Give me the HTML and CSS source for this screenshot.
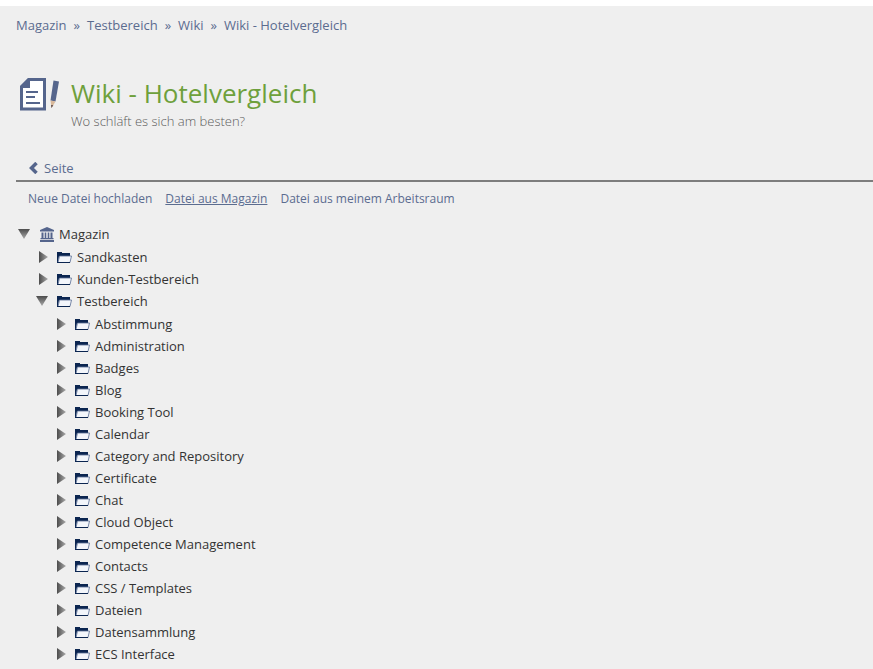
FILE: index.html
```html
<!DOCTYPE html>
<html lang="de">
<head>
<meta charset="utf-8">
<title>Wiki - Hotelvergleich</title>
<link rel="stylesheet" href="styles.css">
</head>
<body>
<svg class="defs" aria-hidden="true">
  <defs>
    <linearGradient id="shade-right" x1="0" x2="1" y1="0" y2="0"><stop offset="0" stop-color="#4c4c4c"/><stop offset="1" stop-color="#aaaaaa"/></linearGradient>
    <linearGradient id="shade-down" x1="0" x2="0" y1="0" y2="1"><stop offset="0" stop-color="#4c4c4c"/><stop offset="1" stop-color="#aaaaaa"/></linearGradient>
    <symbol id="closed" viewBox="0 0 12 12"><path fill="url(#shade-right)" d="M3 0 12 6 3 12z"/></symbol>
    <symbol id="open" viewBox="0 0 12 12"><path fill="url(#shade-down)" d="M0 1H12L6 11z"/></symbol>
    <symbol id="folder" viewBox="0 0 16 12">
      <path fill="#0b2550" d="M0 1H5V2H13V5H2L1 12H0z"/>
      <path fill="#f3f6fb" stroke="#5a6f96" stroke-width=".8" d="M2.500 5H14.500L13 11.500H1z"/>
      <path stroke="#0b2550" d="M0 11.500H13"/>
    </symbol>
  </defs>
</svg>
<div class="page">
  <nav class="breadcrumb" aria-label="Pfad">
    <a href="#">Magazin</a><span>»</span><a href="#">Testbereich</a><span>»</span><a href="#">Wiki</a><span>»</span><a href="#">Wiki - Hotelvergleich</a>
  </nav>
  <header class="heading">
    <svg class="wiki-icon" viewBox="0 0 40 36" aria-hidden="true">
      <path fill="#fff" stroke="#55658c" stroke-width="3" d="M10 4.500H25.500V34H2.500V12z"/>
      <path fill="#55658c" d="M9 3H11V13H1V11z"/>
      <path stroke="#55658c" stroke-width="2" d="M7 17H19M7 22H16M7 28H21"/>
      <path fill="#55658c" d="M34.500 5.500 40 6.500 36.500 26.500 31.500 25.500z"/>
      <path fill="#d9b99b" d="M31.500 25.500 36.500 26.500 32.500 33z"/>
      <path fill="#5c4a48" d="M32 30 34.300 30.300 32.500 33z"/>
    </svg>
    <div>
      <h1>Wiki - Hotelvergleich</h1>
      <p>Wo schläft es sich am besten?</p>
    </div>
  </header>
  <nav class="tabs" aria-label="Reiter">
    <a href="#"><svg class="chevron" viewBox="0 0 10 12" aria-hidden="true"><path fill="none" stroke="#55658c" stroke-width="3.500" d="M8.500 1 3.500 6 8.500 11"/></svg>Seite</a>
  </nav>
  <nav class="subtabs" aria-label="Quelle">
    <a href="#">Neue Datei hochladen</a>
    <a href="#" class="active" aria-current="page">Datei aus Magazin</a>
    <a href="#">Datei aus meinem Arbeitsraum</a>
  </nav>
  <ul class="tree">
    <li>
      <div class="node"><button type="button" aria-label="Magazin zuklappen"><svg viewBox="0 0 12 12"><use href="#open"/></svg></button>
        <svg class="bank" viewBox="0 0 16 16" aria-hidden="true"><path fill="#55658c" d="M8 1 15 4V5.500H1V4zM2.500 6.500H4.500V12H2.500zM5.700 6.500H7.300V12H5.700zM8.700 6.500H10.300V12H8.700zM11.500 6.500H13.500V12H11.500zM1.500 12H14.500V13.200H1.500zM1 14H15V16H1z"/></svg><span>Magazin</span></div>
      <ul>
        <li><div class="node"><button type="button" aria-label="Sandkasten aufklappen"><svg viewBox="0 0 12 12"><use href="#closed"/></svg></button><svg class="folder"><use href="#folder"/></svg><span>Sandkasten</span></div></li>
        <li><div class="node"><button type="button" aria-label="Kunden-Testbereich aufklappen"><svg viewBox="0 0 12 12"><use href="#closed"/></svg></button><svg class="folder"><use href="#folder"/></svg><span>Kunden-Testbereich</span></div></li>
        <li>
          <div class="node"><button type="button" aria-label="Testbereich zuklappen"><svg viewBox="0 0 12 12"><use href="#open"/></svg></button><svg class="folder"><use href="#folder"/></svg><span>Testbereich</span></div>
          <ul>
            <li><div class="node"><button type="button" aria-label="Abstimmung aufklappen"><svg viewBox="0 0 12 12"><use href="#closed"/></svg></button><svg class="folder"><use href="#folder"/></svg><span>Abstimmung</span></div></li>
            <li><div class="node"><button type="button" aria-label="Administration aufklappen"><svg viewBox="0 0 12 12"><use href="#closed"/></svg></button><svg class="folder"><use href="#folder"/></svg><span>Administration</span></div></li>
            <li><div class="node"><button type="button" aria-label="Badges aufklappen"><svg viewBox="0 0 12 12"><use href="#closed"/></svg></button><svg class="folder"><use href="#folder"/></svg><span>Badges</span></div></li>
            <li><div class="node"><button type="button" aria-label="Blog aufklappen"><svg viewBox="0 0 12 12"><use href="#closed"/></svg></button><svg class="folder"><use href="#folder"/></svg><span>Blog</span></div></li>
            <li><div class="node"><button type="button" aria-label="Booking Tool aufklappen"><svg viewBox="0 0 12 12"><use href="#closed"/></svg></button><svg class="folder"><use href="#folder"/></svg><span>Booking Tool</span></div></li>
            <li><div class="node"><button type="button" aria-label="Calendar aufklappen"><svg viewBox="0 0 12 12"><use href="#closed"/></svg></button><svg class="folder"><use href="#folder"/></svg><span>Calendar</span></div></li>
            <li><div class="node"><button type="button" aria-label="Category and Repository aufklappen"><svg viewBox="0 0 12 12"><use href="#closed"/></svg></button><svg class="folder"><use href="#folder"/></svg><span>Category and Repository</span></div></li>
            <li><div class="node"><button type="button" aria-label="Certificate aufklappen"><svg viewBox="0 0 12 12"><use href="#closed"/></svg></button><svg class="folder"><use href="#folder"/></svg><span>Certificate</span></div></li>
            <li><div class="node"><button type="button" aria-label="Chat aufklappen"><svg viewBox="0 0 12 12"><use href="#closed"/></svg></button><svg class="folder"><use href="#folder"/></svg><span>Chat</span></div></li>
            <li><div class="node"><button type="button" aria-label="Cloud Object aufklappen"><svg viewBox="0 0 12 12"><use href="#closed"/></svg></button><svg class="folder"><use href="#folder"/></svg><span>Cloud Object</span></div></li>
            <li><div class="node"><button type="button" aria-label="Competence Management aufklappen"><svg viewBox="0 0 12 12"><use href="#closed"/></svg></button><svg class="folder"><use href="#folder"/></svg><span>Competence Management</span></div></li>
            <li><div class="node"><button type="button" aria-label="Contacts aufklappen"><svg viewBox="0 0 12 12"><use href="#closed"/></svg></button><svg class="folder"><use href="#folder"/></svg><span>Contacts</span></div></li>
            <li><div class="node"><button type="button" aria-label="CSS / Templates aufklappen"><svg viewBox="0 0 12 12"><use href="#closed"/></svg></button><svg class="folder"><use href="#folder"/></svg><span>CSS / Templates</span></div></li>
            <li><div class="node"><button type="button" aria-label="Dateien aufklappen"><svg viewBox="0 0 12 12"><use href="#closed"/></svg></button><svg class="folder"><use href="#folder"/></svg><span>Dateien</span></div></li>
            <li><div class="node"><button type="button" aria-label="Datensammlung aufklappen"><svg viewBox="0 0 12 12"><use href="#closed"/></svg></button><svg class="folder"><use href="#folder"/></svg><span>Datensammlung</span></div></li>
            <li><div class="node"><button type="button" aria-label="ECS Interface aufklappen"><svg viewBox="0 0 12 12"><use href="#closed"/></svg></button><svg class="folder"><use href="#folder"/></svg><span>ECS Interface</span></div></li>
          </ul>
        </li>
      </ul>
    </li>
  </ul>
</div>
</body>
</html>
```
FILE: styles.css
```css
* { box-sizing: border-box; }

body {
  margin: 0;
  border-top: 6px solid #fff;
  background: #efefef;
  color: #333;
  font: 13px/20px "Open Sans", sans-serif;
}

a { color: #5b6c8f; text-decoration: none; }
ul { list-style: none; margin: 0; padding: 0; }
.defs { position: absolute; width: 0; height: 0; }

.page { padding: 9px 0 0 16px; }

.breadcrumb { display: flex; gap: 7px; color: #5b6c8f; }

.heading { display: flex; gap: 12px; margin-top: 40px; }
.wiki-icon { flex: none; width: 40px; height: 36px; margin-left: 3px; }
.heading > div { min-width: 0; }
h1 {
  margin: 0;
  color: #6ea03c;
  font-size: 26px;
  font-weight: 400;
  line-height: 36px;
}
.heading p { margin: 0; color: #5c5c5c; font-weight: 300; }

.tabs {
  margin-top: 27px;
  padding: 0 12px 1px;
  border-bottom: 2px solid #7d7d7d;
}
.tabs a { display: inline-flex; align-items: center; gap: 6px; }
.chevron { width: 10px; height: 12px; }

.subtabs {
  display: flex;
  gap: 13px;
  padding: 7px 12px;
  font-size: 12px;
}
.subtabs .active { text-decoration: underline; }

.tree { margin-top: 7px; }
.tree ul { margin: 1px 0 0 18px; }
.node { display: flex; align-items: center; height: 22px; }
.node button {
  flex: none;
  width: 12px;
  height: 12px;
  margin: 0 9px 0 2px;
  padding: 0;
  border: 0;
  background: none;
}
.node button svg { display: block; width: 12px; height: 12px; }
.node svg { flex: none; }
.folder { width: 16px; height: 12px; margin-right: 4px; }
.bank { width: 16px; height: 16px; margin-right: 4px; }
```
